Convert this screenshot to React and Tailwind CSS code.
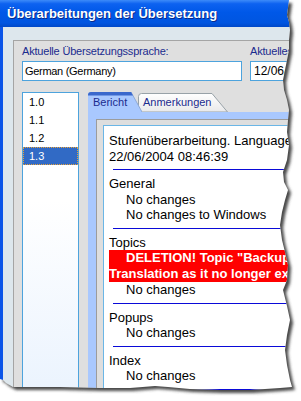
import React from "react";

const versions = ["1.0", "1.1", "1.2", "1.3"];

// outline of the torn-off window shot (right + bottom edge)
const TORN =
  "M0,0 L289,0 L288,8 L287,15 L289,22 L290,30 L289,40 L289,50 L287,60 L285,70 L283,80 L284,90 L287,100 L289,110 L288,120 L287,132 L289,145 L287,160 L283,172 L284,182 L288,190 L285,200 L282,212 L280,225 L282,240 L285,252 L288,265 L287,280 L283,290 L285,298 L287,306 L290,320 L287,335 L285,350 L287,365 L290,380 L292,387 L280,388 L250,390 L220,390 L190,389 L168,387 L155,386 L130,388 L100,388 L60,387 L30,387 L13,387 L6,383 L3,380 L0,379 Z";

function Sep() {
  return <div className="ml-[4px] mt-[5px] mb-[6px] h-px bg-[#0a0ad8]" />;
}

function Item({ children }) {
  return <div className="pl-[17px]">{children}</div>;
}

function TornEdge() {
  return (
    <svg className="pointer-events-none absolute inset-0" width="301" height="401">
      <defs>
        <clipPath id="outside">
          <path clipRule="evenodd" d={`M0 0H301V401H0Z ${TORN}`} />
        </clipPath>
        <filter id="soft" x="-10%" y="-10%" width="120%" height="120%">
          <feGaussianBlur stdDeviation="1.6" />
        </filter>
      </defs>
      <g clipPath="url(#outside)">
        <rect width="301" height="401" fill="#fff" />
        <path d={TORN} transform="translate(3,3)" fill="#4a4a4a" filter="url(#soft)" />
      </g>
    </svg>
  );
}

export default function App() {
  return (
    <div className="relative h-[401px] w-[301px] overflow-hidden bg-white font-['Liberation_Sans',Arial,sans-serif]">
      <div className="flex h-full flex-col">
        <div className="flex h-[27px] shrink-0 items-center bg-[linear-gradient(to_bottom,#3d8bf9_0%,#0d62f0_14%,#0058e8_45%,#0055e0_85%,#0048c8_100%)] pl-[7px]">
          <span className="text-[13px] font-bold leading-[15px] text-white [text-shadow:1px_1px_0_#0a2a8a] whitespace-nowrap">
            Überarbeitungen der Übersetzung
          </span>
        </div>

        <div className="flex flex-1 flex-col border-l-[3px] border-[#0a55e8] bg-[#dde7ed] pl-[10px] pt-[13px]">
          <div className="flex flex-1 flex-col border-l border-t border-[#a5a5a5] bg-[#dfdfdf] pl-[8px] pt-[4px]">
            <div className="flex gap-[8px]">
              <div className="w-[220px] shrink-0">
                <div className="text-[11px] leading-[13px] tracking-[-0.2px] text-[#1b2b8e] whitespace-nowrap">
                  Aktuelle Übersetzungssprache:
                </div>
                <div className="mt-[3px] flex h-[20px] items-center border border-[#4da3dd] bg-white pl-[2px] text-[11px] tracking-[-0.3px] text-black">
                  German (Germany)
                </div>
              </div>
              <div className="w-[120px] shrink-0">
                <div className="text-[11px] leading-[13px] tracking-[-0.2px] text-[#1b2b8e] whitespace-nowrap">
                  Aktuelles Datum:
                </div>
                <div className="mt-[3px] flex h-[20px] items-center border border-[#4da3dd] bg-white pl-[3px] text-[12px] text-black">
                  12/06/2004
                </div>
              </div>
            </div>

            <div className="mt-[11px] flex flex-1 gap-[9px]">
              <div className="w-[57px] shrink-0 border border-[#4da3dd] bg-[linear-gradient(to_bottom,#ffffff_35%,#eaf3fe_100%)]">
                {versions.map((v) => (
                  <div
                    key={v}
                    className={
                      v === "1.3"
                        ? "h-[18px] border border-dotted border-[#e8a23a] bg-[#316ac5] pl-[5px] text-[11px] leading-[16px] text-white"
                        : "h-[18px] border border-transparent pl-[5px] text-[11px] leading-[16px] text-black"
                    }
                  >
                    {v}
                  </div>
                ))}
              </div>

              <div className="flex min-w-0 flex-1 flex-col">
                <div className="flex h-[20px] shrink-0 items-end">
                  <div className="relative z-10 h-[20px] w-[54px] shrink-0 pl-[5px] pt-[4px] text-[11px] leading-[13px] text-[#1b2b8e]">
                    <svg className="absolute inset-0" width="54" height="20">
                      <path d="M0,20 L0,3 Q0,0 3,0 L43,0 L54,20 Z" fill="#a9c8fe" />
                      <path d="M43,0 L54,20" stroke="#8ea9d6" strokeWidth="1" />
                      <path d="M0,3.5 L0,3 Q0,0 3,0 L43,0 L45,3.5 Z" fill="#3a68cc" />
                    </svg>
                    <span className="relative">Bericht</span>
                  </div>
                  <div className="relative -ml-[4px] h-[19px] w-[90px] shrink-0 pl-[5px] pt-[3px] text-[11px] leading-[13px] text-[#1b2b8e]">
                    <svg className="absolute inset-0" width="90" height="19">
                      <defs>
                        <linearGradient id="tabg" x1="0" y1="0" x2="0" y2="1">
                          <stop offset="0" stopColor="#ffffff" />
                          <stop offset="1" stopColor="#e9e9ea" />
                        </linearGradient>
                      </defs>
                      <path
                        d="M0.5,19 L0.5,3.5 Q0.5,0.5 3.5,0.5 L74,0.5 L89.5,19 Z"
                        fill="url(#tabg)"
                        stroke="#98a2a8"
                      />
                    </svg>
                    <span className="relative">Anmerkungen</span>
                  </div>
                </div>

                <div className="flex flex-1 flex-col bg-[#a9c8fe] pl-[8px] pt-[7px]">
                  <div className="flex flex-1 flex-col border-l border-t border-[#9c9c9c] bg-[#dedede] pl-[6px] pt-[5px]">
                    <div className="flex-1 overflow-hidden whitespace-nowrap border-l border-t border-[#6bb6e6] bg-white pl-[5px] pt-[7px] text-[13px] leading-[15.5px] text-black">
                      <div>Stufenüberarbeitung. Language: German (Germany)</div>
                      <div>22/06/2004 08:46:39</div>
                      <Sep />
                      <div>General</div>
                      <Item>No changes</Item>
                      <Item>No changes to Windows</Item>
                      <Sep />
                      <div>Topics</div>
                      <div className="bg-[#ff0000] font-bold leading-[16px] text-white">
                        <div className="pl-[17px]">DELETION! Topic "Backup Procedures" has been removed from the</div>
                        <div>Translation as it no longer exists in the source project.</div>
                      </div>
                      <Item>No changes</Item>
                      <Sep />
                      <div>Popups</div>
                      <Item>No changes</Item>
                      <Sep />
                      <div>Index</div>
                      <Item>No changes</Item>
                      <Sep />
                    </div>
                  </div>
                </div>
              </div>
            </div>
          </div>
        </div>
      </div>
      <TornEdge />
    </div>
  );
}
